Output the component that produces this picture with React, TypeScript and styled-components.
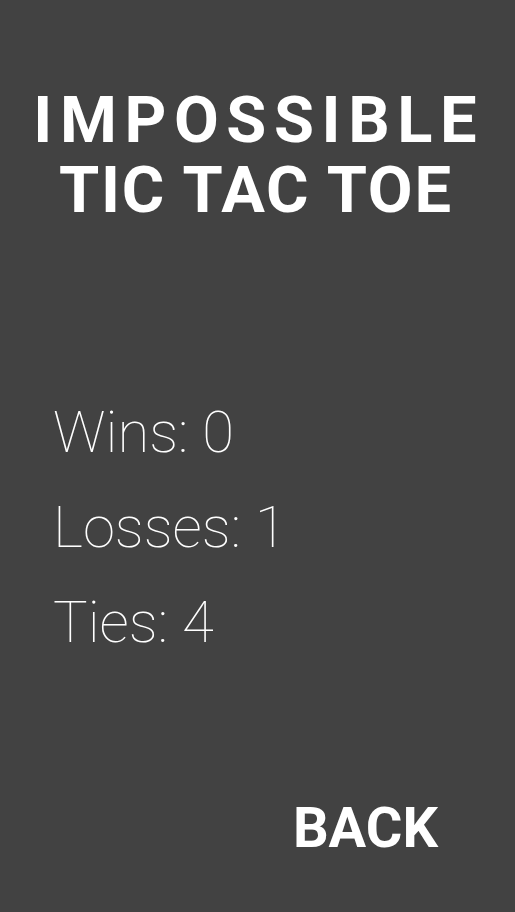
import React from "react";
import styled, { createGlobalStyle } from "styled-components";

const Global = createGlobalStyle`
  html, body { margin: 0; padding: 0; background: #424242; }
  body { font-family: Roboto, "Noto Sans", sans-serif; }
`;

const Screen = styled.div`
  width: 515px;
  height: 912px;
  background: #424242;
  color: #ffffff;
  display: flex;
  flex-direction: column;
  box-sizing: border-box;
  overflow: hidden;
`;

const Title = styled.h1`
  margin: 0;
  padding: 85px 5px 0 0;
  display: flex;
  flex-direction: column;
  align-items: center;
  font-family: Roboto, sans-serif;
  font-weight: 700;
  font-size: 65px;
  line-height: 70px;
`;

const TitleLine = styled.span<{ $spacing: number }>`
  white-space: nowrap;
  letter-spacing: ${(p) => p.$spacing}px;
  margin-right: -${(p) => p.$spacing}px;
`;

const Stats = styled.div`
  margin-top: 160px;
  padding-left: 53px;
  display: flex;
  flex-direction: column;
`;

const Stat = styled.div`
  font-family: Roboto, sans-serif;
  font-weight: 100;
  font-size: 58px;
  line-height: 95px;
`;

const Footer = styled.div`
  margin-top: auto;
  padding: 0 77px 52px 0;
  display: flex;
  justify-content: flex-end;
`;

const BackButton = styled.button`
  background: none;
  border: none;
  padding: 0;
  color: #ffffff;
  font-family: Roboto, sans-serif;
  font-weight: 700;
  font-size: 56px;
  line-height: 64px;
  cursor: pointer;
`;

export default function App() {
  return (
    <>
      <Global />
      <Screen>
        <Title>
          <TitleLine $spacing={7.6}>IMPOSSIBLE</TitleLine>
          <TitleLine $spacing={1.8}>TIC TAC TOE</TitleLine>
        </Title>
        <Stats>
          <Stat>Wins: 0</Stat>
          <Stat>Losses: 1</Stat>
          <Stat>Ties: 4</Stat>
        </Stats>
        <Footer>
          <BackButton>BACK</BackButton>
        </Footer>
      </Screen>
    </>
  );
}
